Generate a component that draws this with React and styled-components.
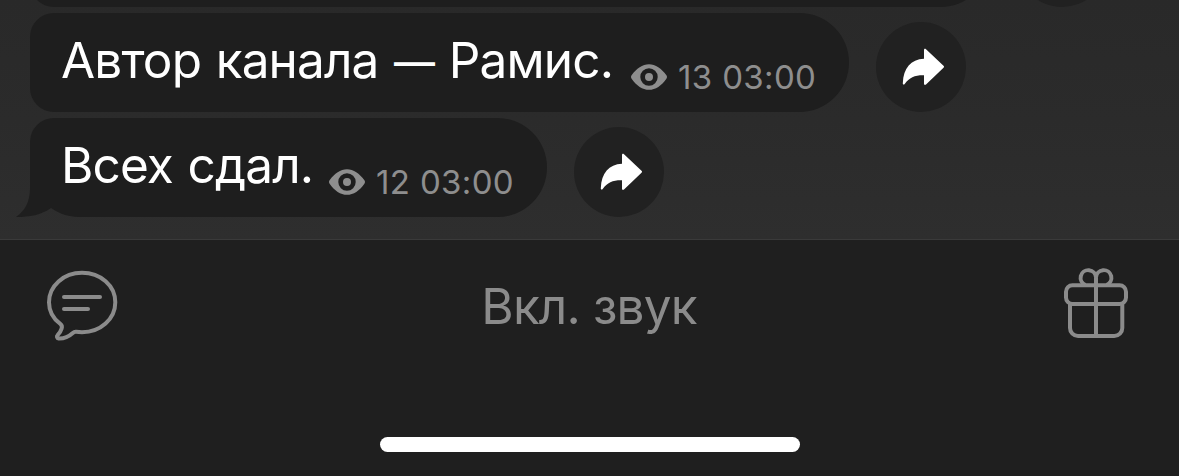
import styled, { createGlobalStyle } from "styled-components";

const GlobalStyle = createGlobalStyle`
  body {
    margin: 0;
    background: #1f1f1f;
    font-family: Inter, "Liberation Sans", sans-serif;
  }
`;

const Screen = styled.div`
  display: flex;
  flex-direction: column;
  width: 1179px;
  height: 476px;
  overflow: hidden;
`;

const Messages = styled.main`
  display: flex;
  flex-direction: column;
  justify-content: flex-end;
  gap: 6px;
  height: 239px;
  box-sizing: border-box;
  padding: 0 0 22px 30px;
  overflow: hidden;
  background: linear-gradient(#292929, #2b2b2b 50%, #2e2e2e);
`;

const Row = styled.div`
  display: flex;
  align-items: flex-end;
  flex-shrink: 0;
  gap: 27px;
`;

const Bubble = styled.div`
  position: relative;
  display: flex;
  align-items: flex-start;
  box-sizing: border-box;
  width: ${(props) => props.$width}px;
  height: 99px;
  padding: 17px 0 0 31px;
  border-radius: 24px 49.5px 49.5px ${(props) => (props.$last ? 49.5 : 24)}px;
  background: #1e1e1e;
  white-space: nowrap;
`;

const Tail = styled.svg`
  position: absolute;
  left: -14px;
  bottom: 0;
`;

const Text = styled.span`
  flex-shrink: 0;
  width: ${(props) => props.$width}px;
  color: #fff;
  font-size: 49.5px;
  line-height: 60px;
  letter-spacing: -0.85px;
  word-spacing: 1.5px;
`;

const Dash = styled.span`
  margin-left: 1px;
  font-size: 41px;
  font-weight: 500;
  line-height: 1;
  vertical-align: 1px;
`;

const Meta = styled.span`
  display: flex;
  align-items: center;
  gap: 11px;
  margin-top: 27px;
  color: #8e8e8e;
  font-size: 33px;
  line-height: 40px;
  letter-spacing: 0.35px;
`;

const ShareButton = styled.button`
  width: 90px;
  height: 90px;
  padding: 0;
  border: none;
  border-radius: 50%;
  background: #212121;
`;

const BottomBar = styled.footer`
  display: flex;
  flex-direction: column;
  align-items: center;
  justify-content: space-between;
  flex: 1;
  box-sizing: border-box;
  padding-bottom: 24px;
  border-top: 1px solid #3a3a3a;
  background: #1f1f1f;
`;

const Actions = styled.div`
  display: flex;
  align-items: flex-start;
  justify-content: space-between;
  align-self: stretch;
  padding: 26px 48px 0 45px;
`;

const MuteButton = styled.button`
  padding: 10px 4px 0 0;
  border: none;
  background: none;
  color: #8b8b8b;
  font: inherit;
  font-size: 49.5px;
  line-height: 60px;
  letter-spacing: -0.85px;
`;

const HomeIndicator = styled.div`
  width: 420px;
  height: 15px;
  border-radius: 8px;
  background: #fff;
`;

const messages = [
  { id: 1, width: 960 },
  {
    id: 2,
    width: 819,
    text: (
      <>
        Автор канала <Dash>—</Dash> Рамис.
      </>
    ),
    textWidth: 570,
    views: 13,
    time: "03:00",
  },
  { id: 3, width: 517, text: "Всех сдал.", textWidth: 268, views: 12, time: "03:00" },
];

function EyeIcon() {
  return (
    <svg width="36" height="26" viewBox="0 0 36 26">
      <path
        fill="#8e8e8e"
        fillRule="evenodd"
        d="M.6 11.3C5.5 4.3 11.5.2 18 .2s12.5 4.1 17.4 11.1c.8 1.1.8 2.3 0 3.4C30.500 21.700 24.500 25.800 18 25.800S5.500 21.700.6 14.700c-.8-1.100-.8-2.300 0-3.400ZM18 4.300a8.700 8.700 0 1 0 0 17.400a8.700 8.700 0 1 0 0-17.400Z"
      />
      <circle cx="18" cy="13" r="4" fill="#8e8e8e" />
    </svg>
  );
}

function ShareIcon() {
  return (
    <svg width="90" height="90" viewBox="0 0 90 90" fill="#fff">
      <path d="M48 28.200c0-1.400 1-1.800 2-.9L67.500 43.800c.7.700.7 1.300 0 2L50 62.400c-1 .9-2 .5-2-.9V53.200c-9-.2-14.500 2.100-19.300 8.700-.8 1.100-2 .9-1.900-.6.700-15.300 8-23.900 21.200-24.500Z" />
    </svg>
  );
}

function CommentIcon() {
  return (
    <svg
      width="76"
      height="76"
      viewBox="0 0 76 76"
      fill="none"
      stroke="#8b8b8b"
      strokeWidth="4"
      strokeLinecap="round"
      strokeLinejoin="round"
    >
      <path d="M37 6.800C18.500 6.800 4 19.900 4 36.200c0 9 4.100 16.400 11.300 21.600 1.700 1.300 2 2.800 1.300 4.900-.8 2.600-2.300 4.900-4.100 6.600-1.100 1.100-.5 3.100 1 3.200 5.700.3 10-1.700 14.300-5.600 1.200-1.100 2-1.300 3.500-1.100 1.900.3 3.800.4 5.700.4 18.500 0 33.300-13.100 33.300-29.900S55.500 6.800 37 6.800Z" />
      <path d="M19 31h36M19 43h24" />
    </svg>
  );
}

function GiftIcon() {
  return (
    <svg
      width="70"
      height="76"
      viewBox="0 0 70 76"
      fill="none"
      stroke="#8b8b8b"
      strokeWidth="4"
      strokeLinejoin="round"
    >
      <rect x="5" y="19.300" width="60" height="18.700" rx="6.500" />
      <path d="M9 38v24a8 8 0 0 0 8 8h36.300a8 8 0 0 0 8-8V38M35 70V12" />
      <path d="M24.500 19a7.700 7.700 0 1 1 10.500-7.500a7.700 7.700 0 1 1 10.500 7.500" />
    </svg>
  );
}

function Message({ message, last }) {
  return (
    <Row>
      <Bubble $width={message.width} $last={last}>
        {last && (
          <Tail width="36" height="60" viewBox="0 0 36 60">
            <path fill="#1e1e1e" d="M14 0V31C14 44 9.500 53.500 0 60C14 60 25 58 35 51L36 50V0Z" />
          </Tail>
        )}
        {message.text && (
          <>
            <Text $width={message.textWidth}>{message.text}</Text>
            <Meta>
              <EyeIcon />
              <span>
                {message.views} {message.time}
              </span>
            </Meta>
          </>
        )}
      </Bubble>
      <ShareButton>
        <ShareIcon />
      </ShareButton>
    </Row>
  );
}

function App() {
  return (
    <>
      <GlobalStyle />
      <Screen>
        <Messages>
          {messages.map((message, i) => (
            <Message key={message.id} message={message} last={i === messages.length - 1} />
          ))}
        </Messages>
        <BottomBar>
          <Actions>
            <CommentIcon />
            <MuteButton>Вкл. звук</MuteButton>
            <GiftIcon />
          </Actions>
          <HomeIndicator />
        </BottomBar>
      </Screen>
    </>
  );
}

export default App;
